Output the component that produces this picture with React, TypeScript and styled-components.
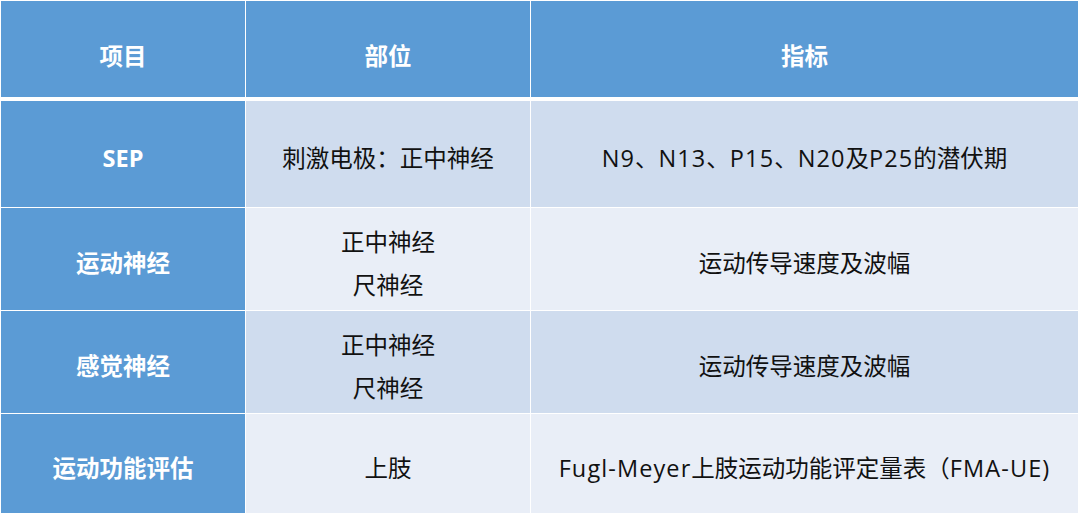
import React from "react"
import styled, { createGlobalStyle } from "styled-components"

const GlobalStyle = createGlobalStyle`
  html, body {
    margin: 0;
    padding: 0;
    background: #ffffff;
  }
  body {
    font-family: "Open Sans", "Noto Sans CJK SC", sans-serif;
  }
`

const Table = styled.div`
  display: grid;
  grid-template-columns: 244px 284px 547px;
  grid-template-rows: 99px 106px 102px 102px 99px;
  column-gap: 1px;
  row-gap: 1px;
  padding: 1px 0 0 1px;
  width: 1078px;
  background: #ffffff;
`

type Kind = "head" | "label" | "odd" | "even"

const Cell = styled.div<{ $kind: Kind }>`
  display: flex;
  flex-direction: column;
  align-items: center;
  justify-content: center;
  padding-top: ${p => (p.$kind === "head" ? "14px" : "9px")};
  box-sizing: border-box;
  text-align: center;
  font-size: 23.5px;
  line-height: 43px;
  margin-bottom: ${p => (p.$kind === "head" ? "3px" : "0")};
  background: ${p =>
    p.$kind === "head" || p.$kind === "label"
      ? "#5b9bd5"
      : p.$kind === "odd"
      ? "#cfdcee"
      : "#e9eef7"};
  color: ${p => (p.$kind === "head" || p.$kind === "label" ? "#ffffff" : "#111111")};
  font-weight: ${p => (p.$kind === "head" || p.$kind === "label" ? 700 : 400)};
`

// latin runs are set a touch wider, like the original's Segoe-style glyphs
const Latin = styled.span`
  letter-spacing: 1.1px;
`

const Line = styled.span`
  white-space: nowrap;
`

function Text({ value }: { value: string }) {
  const parts = value.match(/[\x20-\x7e]+|[^\x20-\x7e]+/g) || []
  return (
    <Line>
      {parts.map((s, i) =>
        /^[\x20-\x7e]+$/.test(s) ? <Latin key={i}>{s}</Latin> : <React.Fragment key={i}>{s}</React.Fragment>
      )}
    </Line>
  )
}

const rows: { label: string; part: string[]; index: string }[] = [
  { label: "SEP", part: ["刺激电极：正中神经"], index: "N9、N13、P15、N20及P25的潜伏期" },
  { label: "运动神经", part: ["正中神经", "尺神经"], index: "运动传导速度及波幅" },
  { label: "感觉神经", part: ["正中神经", "尺神经"], index: "运动传导速度及波幅" },
  { label: "运动功能评估", part: ["上肢"], index: "Fugl-Meyer上肢运动功能评定量表（FMA-UE)" },
]

export default function App() {
  return (
    <>
      <GlobalStyle />
      <Table>
        <Cell $kind="head">项目</Cell>
        <Cell $kind="head">部位</Cell>
        <Cell $kind="head">指标</Cell>
        {rows.map((r, i) => {
          const kind: Kind = i % 2 === 0 ? "odd" : "even"
          return (
            <React.Fragment key={i}>
              <Cell $kind="label">{r.label}</Cell>
              <Cell $kind={kind}>
                {r.part.map(p => (
                  <Text key={p} value={p} />
                ))}
              </Cell>
              <Cell $kind={kind}>
                <Text value={r.index} />
              </Cell>
            </React.Fragment>
          )
        })}
      </Table>
    </>
  )
}
